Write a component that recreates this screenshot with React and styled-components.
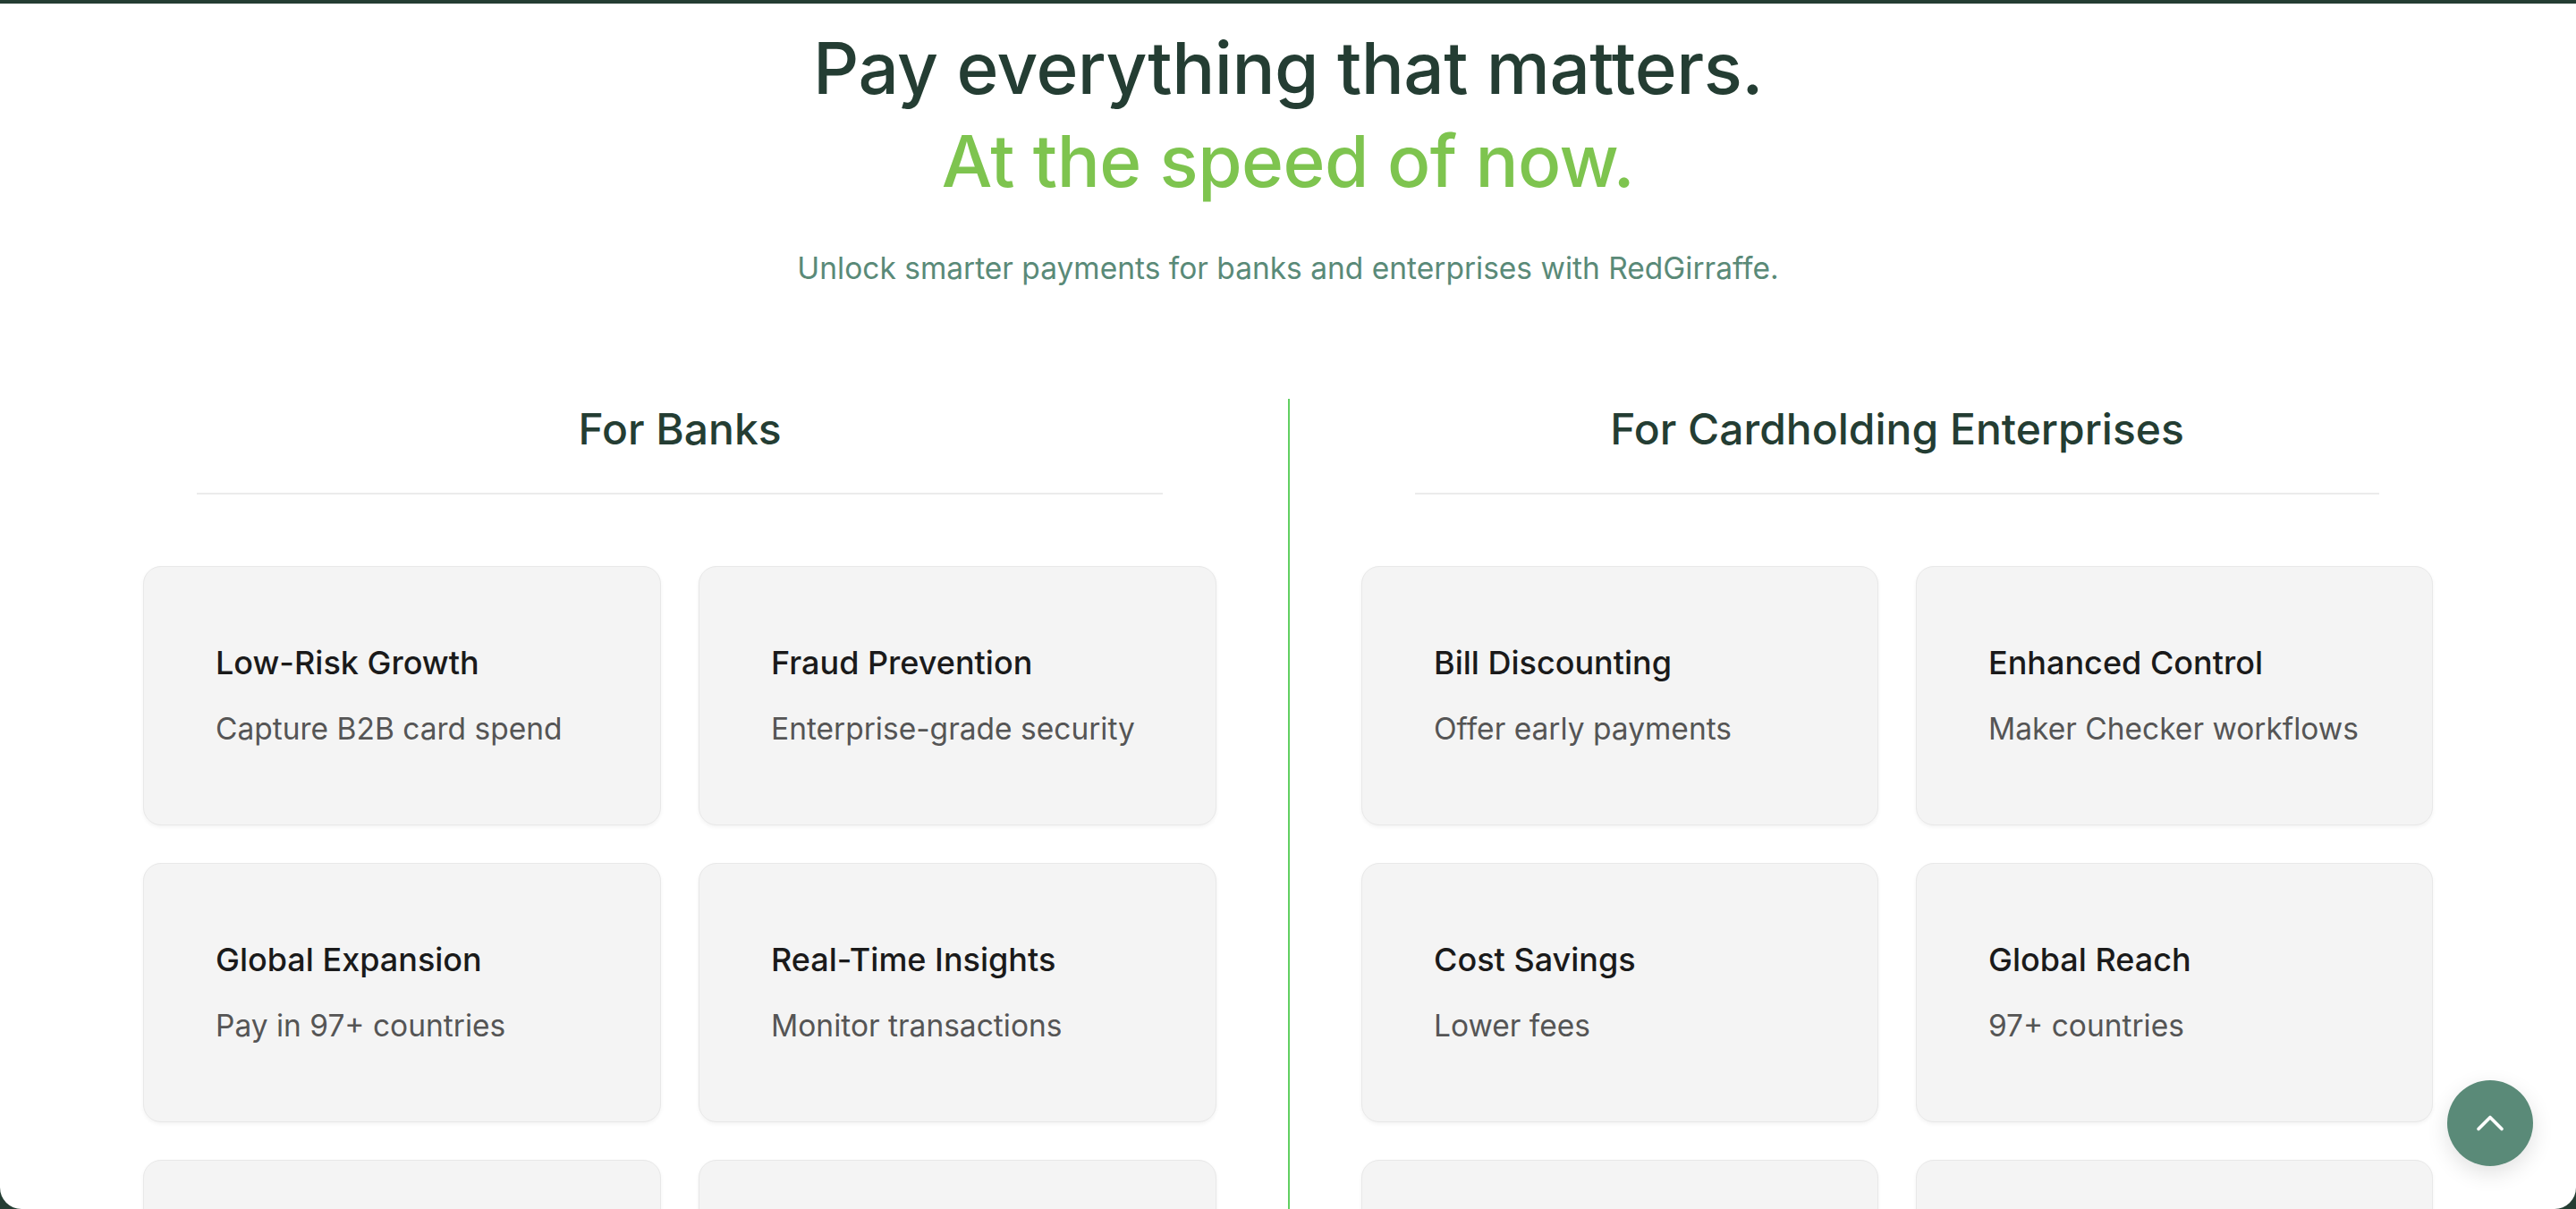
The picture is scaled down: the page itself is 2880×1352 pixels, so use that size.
import React from 'react';
import styled, { createGlobalStyle } from 'styled-components';
import { ChevronUp } from 'lucide-react';

const GlobalStyle = createGlobalStyle`
  * {
    box-sizing: border-box;
  }

  body {
    margin: 0;
    background: #243d33;
    font-family: Inter, "Noto Sans", sans-serif;
    -webkit-font-smoothing: antialiased;
  }
`;

const Frame = styled.main`
  margin-top: 4px;
  height: calc(100vh - 4px);
  background: #ffffff;
  border-radius: 0 0 24px 24px;
  overflow: hidden;
`;

const Hero = styled.header`
  padding-top: 20px;
  text-align: center;
`;

const Headline = styled.h1`
  margin: 0;
  font-size: 80px;
  line-height: 104px;
  font-weight: 500;
  letter-spacing: -0.5px;
  color: #243d33;
`;

const Accent = styled.span`
  display: block;
  color: #7ec44f;
`;

const Lead = styled.p`
  margin: 44px 0 0;
  font-size: 33.5px;
  line-height: 48px;
  color: #5a8a78;
`;

const Columns = styled.section`
  display: grid;
  grid-template-columns: 1fr 1fr;
  margin: 122px 160px 0;
`;

const Column = styled.div`
  padding: ${({ $side }) => ($side === 'right' ? '0 0 0 80px' : '0 80px 0 0')};
  border-left: ${({ $side }) => ($side === 'right' ? '2px solid #62cf62' : 'none')};
  min-height: 1000px;
`;

const ColumnTitle = styled.h2`
  width: 90%;
  margin: 0 auto;
  padding: 5px 0 42px;
  border-bottom: 2px solid #ebebeb;
  text-align: center;
  font-size: 48px;
  line-height: 58px;
  font-weight: 500;
  color: #243d33;
`;

const CardGrid = styled.div`
  display: grid;
  grid-template-columns: 1fr 1fr;
  gap: 42px;
  margin-top: 80px;
`;

const Card = styled.article`
  height: 290px;
  padding: 0 80px;
  display: flex;
  flex-direction: column;
  justify-content: center;
  gap: 30px;
  background: #f4f4f4;
  border: 1px solid #e8e8e8;
  border-radius: 20px;
  box-shadow: 0 2px 4px rgba(0, 0, 0, 0.05);
`;

const CardTitle = styled.h3`
  margin: 0;
  font-size: 36px;
  line-height: 44px;
  font-weight: 500;
  color: #1a1a1a;
  white-space: nowrap;
`;

const CardText = styled.p`
  margin: 0;
  font-size: 33.5px;
  line-height: 44px;
  color: #555555;
  white-space: nowrap;
`;

const TopButton = styled.button`
  position: fixed;
  right: 48px;
  bottom: 48px;
  width: 96px;
  height: 96px;
  border: none;
  border-radius: 50%;
  background: #5a8a78;
  color: #ffffff;
  display: flex;
  align-items: center;
  justify-content: center;
  box-shadow: 0 8px 24px rgba(0, 0, 0, 0.12);
  cursor: pointer;
`;

// the last row sits below the fold, its copy is never visible
const banks = [
  { id: 'b1', title: 'Low-Risk Growth', text: 'Capture B2B card spend' },
  { id: 'b2', title: 'Fraud Prevention', text: 'Enterprise-grade security' },
  { id: 'b3', title: 'Global Expansion', text: 'Pay in 97+ countries' },
  { id: 'b4', title: 'Real-Time Insights', text: 'Monitor transactions' },
  { id: 'b5' },
  { id: 'b6' },
];

const enterprises = [
  { id: 'e1', title: 'Bill Discounting', text: 'Offer early payments' },
  { id: 'e2', title: 'Enhanced Control', text: 'Maker Checker workflows' },
  { id: 'e3', title: 'Cost Savings', text: 'Lower fees' },
  { id: 'e4', title: 'Global Reach', text: '97+ countries' },
  { id: 'e5' },
  { id: 'e6' },
];

const FeatureColumn = ({ side, title, items }) => (
  <Column $side={side}>
    <ColumnTitle>{title}</ColumnTitle>
    <CardGrid>
      {items.map((item) => (
        <Card key={item.id}>
          {item.title && <CardTitle>{item.title}</CardTitle>}
          {item.text && <CardText>{item.text}</CardText>}
        </Card>
      ))}
    </CardGrid>
  </Column>
);

const App = () => (
  <>
    <GlobalStyle />
    <Frame>
      <Hero>
        <Headline>
          Pay everything that matters.
          <Accent>At the speed of now.</Accent>
        </Headline>
        <Lead>Unlock smarter payments for banks and enterprises with RedGirraffe.</Lead>
      </Hero>
      <Columns>
        <FeatureColumn side="left" title="For Banks" items={banks} />
        <FeatureColumn side="right" title="For Cardholding Enterprises" items={enterprises} />
      </Columns>
    </Frame>
    <TopButton aria-label="Back to top">
      <ChevronUp size={52} strokeWidth={1.7} />
    </TopButton>
  </>
);

export default App;
